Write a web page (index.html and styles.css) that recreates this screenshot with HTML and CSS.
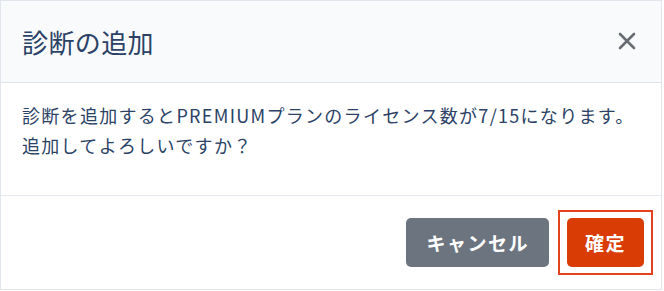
FILE: index.html
```html
<!DOCTYPE html>
<html lang="ja">
<head>
    <meta charset="UTF-8">
    <title>診断の追加</title>
    <link rel="stylesheet" href="styles.css">
</head>
<body>
<div class="modal">
    <div class="modal-header">
        <h5 class="modal-title">診断の追加</h5>
        <button class="close-button" aria-label="閉じる">
            <svg width="18" height="18" viewBox="0 0 18 18"><path d="M2 2 L16 16 M16 2 L2 16" stroke="#696d73" stroke-width="2.6" stroke-linecap="round"/></svg>
        </button>
    </div>
    <div class="modal-body">
        <p>診断を追加するとPREMIUMプランのライセンス数が7/15になります。<br>追加してよろしいですか？</p>
    </div>
    <div class="modal-footer">
        <button class="btn btn-cancel">キャンセル</button>
        <span class="highlight">
            <button class="btn btn-confirm">確定</button>
        </span>
    </div>
</div>
</body>
</html>
```

FILE: styles.css
```css
body { margin: 0; font-family: "Noto Sans CJK JP", "Noto Sans", sans-serif; background: #fff; }
.modal { width: 660px; height: 288px; border: 1px solid #e1e5ec; display: flex; flex-direction: column; }
.modal-header {
    height: 81px; background: #f9fafc; border-bottom: 1px solid #dfe3ea;
    display: flex; align-items: center; justify-content: space-between; padding: 0 25px 0 21px;
}
.modal-title { margin: 0; font-size: 26px; font-weight: 400; color: #2b4266; letter-spacing: 0.4px; }
.close-button { background: none; border: none; padding: 0; margin-top: 2px; cursor: pointer; }
.modal-body { height: 112px; border-bottom: 1px solid #e3e7ee; padding: 0 21px; }
.modal-body p { margin: 17px 0 0; font-size: 18px; line-height: 30px; color: #2b4266; letter-spacing: 1.3px; }
.modal-footer { flex: 1; display: flex; align-items: center; justify-content: flex-end; gap: 9px; padding-right: 8px; }
.btn { border: none; border-radius: 5px; height: 49px; color: #fff; font-family: inherit; font-size: 19px; font-weight: 700; letter-spacing: 1.5px; cursor: pointer; }
.btn-cancel { background: #6c757f; padding: 0 20px; }
.btn-confirm { background: #d93c05; padding: 0 18px; }
.highlight { display: flex; border: 2px solid #e2431e; padding: 6px 7px; }
```
